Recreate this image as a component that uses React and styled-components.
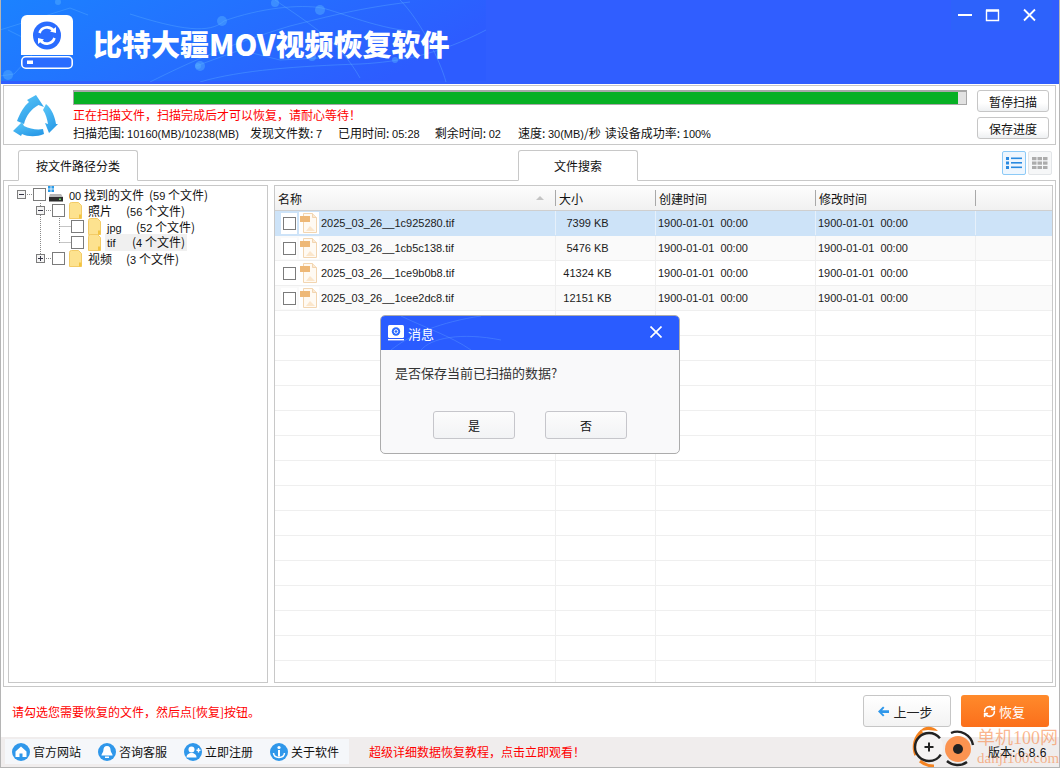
import React from 'react';
import styled, { createGlobalStyle } from 'styled-components';
import { RefreshCw } from 'lucide-react';

const GlobalStyle = createGlobalStyle`
  * { box-sizing: border-box; }
  html, body { margin: 0; padding: 0; background: #fff; }
  body {
    font-family: "Liberation Sans", "Noto Sans CJK SC", sans-serif;
    font-size: 12px;
    color: #111;
  }
`;

// Janela principal
const Window = styled.div`
  position: relative;
  width: 1060px;
  height: 768px;
  overflow: hidden;
  display: flex;
  flex-direction: column;
  background: #fff;
  border-left: 1px solid #b5b5b5;
  border-right: 1px solid #b5b5b5;
  border-bottom: 1px solid #b5b5b5;
`;

const Header = styled.header`
  position: relative;
  flex: none;
  height: 84px;
  margin: 0 -1px;
  background: #305eff;
  display: flex;
  align-items: flex-start;
`;

const HeaderArt = styled.svg`
  position: absolute;
  left: 0;
  top: 0;
`;

const Brand = styled.div`
  position: relative;
  display: flex;
  align-items: center;
  padding: 15px 0 0 21px;
  gap: 20px;
`;

const BrandTitle = styled.h1`
  margin: 0;
  color: #fff;
  font-family: "Noto Sans CJK SC", sans-serif;
  font-size: 29px;
  font-weight: 900;
  line-height: 30px;
  padding-top: 2px;
  white-space: nowrap;
`;

const WindowControls = styled.div`
  position: relative;
  margin-left: auto;
  margin-right: 8px;
  width: 101px;
  height: 30px;
  background: #2d62fb;
  display: flex;
  align-items: center;
`;

const Scan = styled.section`
  flex: none;
  margin: 1px 3px 0 2px;
  height: 60px;
  border: 1px solid #c8c8c8;
  display: flex;
`;

const ScanIcon = styled.div`
  flex: none;
  width: 69px;
  padding: 9px 0 0 9px;
`;

const ScanBody = styled.div`
  flex: none;
  width: 894px;
  padding-top: 4px;
`;

const Progress = styled.div`
  height: 15px;
  border: 1px solid #a8a8a8;
  border-top-width: 2px;
  background: #e2e2e2;
`;

const ProgressFill = styled.div`
  height: 100%;
  background: #07b024;
`;

const ScanMessage = styled.div`
  color: #f00;
  line-height: 16px;
  margin-top: 2px;
  font-family: "Noto Sans CJK SC", sans-serif;
`;

const Stats = styled.div`
  display: flex;
  gap: 15px;
  line-height: 18px;
  margin-top: 1px;
  white-space: nowrap;
  font-family: "Noto Sans CJK SC", sans-serif;
`;

const Stat = styled.span`
  margin-left: ${(p) => p.$shift || 0}px;
`;

const Num = styled.span`
  font-family: "Liberation Sans", sans-serif;
  font-size: 11px;
`;

const ScanButtons = styled.div`
  flex: none;
  margin-left: 10px;
  padding-top: 4px;
  display: flex;
  flex-direction: column;
  gap: 5px;
`;

const PlainButton = styled.button`
  width: 72px;
  height: 22px;
  padding: 0;
  border: 1px solid #c6c6c6;
  border-radius: 3px;
  background: linear-gradient(#fff 60%, #eef0f2);
  font-family: "Noto Sans CJK SC", sans-serif;
  font-size: 12px;
  color: #111;
`;

const TabBar = styled.div`
  flex: none;
  height: 35px;
  margin: 0 3px 0 2px;
  padding: 5px 4px 0 15px;
  display: flex;
  align-items: flex-start;
`;

const Tab = styled.div`
  flex: none;
  width: 120px;
  height: 31px;
  margin-left: ${(p) => p.$offset || 0}px;
  border: 1px solid #c8c8c8;
  border-bottom: 1px solid #fff;
  border-radius: 3px 3px 0 0;
  background: #fff;
  position: relative;
  z-index: 1;
  text-align: center;
  line-height: 29px;
  font-family: "Noto Sans CJK SC", sans-serif;
`;

const ViewButtons = styled.div`
  margin-left: auto;
  display: flex;
  gap: 2px;
  margin-top: 1px;
`;

const ViewButton = styled.div`
  width: 24px;
  height: 24px;
  border: 1px solid ${(p) => (p.$active ? '#8ccaf7' : '#e2e5e8')};
  border-radius: 2px;
  background: ${(p) => (p.$active ? '#eef6fe' : '#f6f7f8')};
  display: flex;
  align-items: center;
  justify-content: center;
`;

const Main = styled.main`
  flex: none;
  height: 507px;
  margin: 0 3px 0 2px;
  padding: 4px 2px 3px 4px;
  border: 1px solid #c8c8c8;
  display: flex;
  gap: 6px;
`;

const TreePanel = styled.div`
  position: relative;
  flex: none;
  width: 260px;
  border: 1px solid #c8c8c8;
`;

const TreeLines = styled.svg`
  position: absolute;
  left: 0;
  top: 0;
`;

const TreeRow = styled.div`
  position: relative;
  height: 16px;
  display: flex;
  align-items: center;
  padding-left: ${(p) => p.$indent}px;
  white-space: nowrap;
  font-family: "Noto Sans CJK SC", sans-serif;
`;

const Expander = styled.span`
  flex: none;
  width: 9px;
  height: 9px;
  margin-right: 7px;
  border: 1px solid #7d7d7d;
  background: #f4f4f4;
  position: relative;
  &::before {
    content: '';
    position: absolute;
    left: 1px;
    right: 1px;
    top: 3px;
    height: 1px;
    background: #334;
  }
  &::after {
    content: '';
    display: ${(p) => (p.$open ? 'none' : 'block')};
    position: absolute;
    top: 1px;
    bottom: 1px;
    left: 3px;
    width: 1px;
    background: #334;
  }
`;

const Check = styled.span`
  flex: none;
  display: block;
  width: 13px;
  height: 13px;
  border: 1px solid #7b7b7b;
  background: #fff;
`;

const TreeName = styled.span`
  flex: none;
  margin-left: ${(p) => p.$gap}px;
  width: ${(p) => p.$width}px;
`;

const TreeSelected = styled.span`
  display: flex;
  margin-left: 4px;
  padding: 0 2px;
  background: #f0f0f0;
  line-height: 15px;
`;

const TreeIcon = styled.svg`
  flex: none;
  margin-left: ${(p) => p.$gap || 0}px;
`;

const Table = styled.div`
  flex: 1;
  border: 1px solid #c8c8c8;
  overflow: hidden;
`;

const columns = '281px 100px 160px 160px 1fr';

const TableHead = styled.div`
  height: 25px;
  display: grid;
  grid-template-columns: ${columns};
  background: linear-gradient(#fdfdfd, #f1f1f1);
  border-bottom: 1px solid #cfcfcf;
  font-family: "Noto Sans CJK SC", sans-serif;
`;

const HeadCell = styled.div`
  position: relative;
  display: flex;
  align-items: center;
  padding-left: 3px;
  &::after {
    content: '';
    position: absolute;
    right: 0;
    top: 4px;
    bottom: 4px;
    width: 1px;
    background: #a9a9a9;
  }
`;

const SortMark = styled.span`
  position: absolute;
  right: 12px;
  top: 10px;
  border-left: 4px solid transparent;
  border-right: 4px solid transparent;
  border-bottom: 4px solid #c4c4c4;
`;

const Row = styled.div`
  height: 25px;
  display: grid;
  grid-template-columns: ${columns};
  align-items: stretch;
  border-bottom: 1px solid ${(p) => (p.$selected ? '#cde3f8' : '#efefef')};
  background: ${(p) => (p.$selected ? '#cde3f8' : p.$stripe ? '#fafafa' : '#fff')};
  font-size: 11px;
  color: #1c1c1c;
`;

const Cell = styled.div`
  display: flex;
  align-items: center;
  border-right: 1px solid ${(p) => (p.$selected ? '#e6f0fa' : '#efefef')};
  padding-left: 2px;
  white-space: pre;
`;

const NameCell = styled(Cell)`
  padding-left: 6px;
`;

const CheckHolder = styled.span`
  flex: none;
  width: 16px;
  height: 21px;
  margin-right: 2px;
  display: flex;
  align-items: center;
  justify-content: center;
  background: #fff;
`;

const FileGlyph = styled.svg`
  flex: none;
  margin-right: 2px;
`;

const SizeCell = styled(Cell)`
  justify-content: center;
  padding: 0 36px 0 0;
`;

const Hint = styled.div`
  flex: none;
  height: 50px;
  padding: 0 10px 2px 11px;
  display: flex;
  align-items: center;
  color: #f00;
  font-family: "Noto Sans CJK SC", sans-serif;
`;

const BackButton = styled.button`
  margin-left: auto;
  width: 88px;
  height: 32px;
  padding: 0 3px 0 0;
  border: 1px solid #c6c6c6;
  border-radius: 3px;
  background: linear-gradient(#fff, #f3f3f3);
  display: flex;
  align-items: center;
  justify-content: center;
  gap: 4px;
  font-family: "Noto Sans CJK SC", sans-serif;
  font-size: 13px;
  color: #222;
`;

const RestoreButton = styled.button`
  margin-left: 10px;
  width: 88px;
  height: 32px;
  padding: 0 2px 0 0;
  border: none;
  border-radius: 3px;
  background: linear-gradient(#ff8a2b, #fb6f1b);
  display: flex;
  align-items: center;
  justify-content: center;
  gap: 3px;
  font-family: "Noto Sans CJK SC", sans-serif;
  font-size: 13px;
  color: #fff;
`;

const BottomBar = styled.footer`
  flex: 1;
  background: #f0eded;
  padding: 2px 0 0 4px;
  display: flex;
  align-items: flex-start;
  font-family: "Noto Sans CJK SC", sans-serif;
`;

const Links = styled.nav`
  flex: none;
  width: 344px;
  height: 25px;
  padding-left: 7px;
  background: #f5f7fa;
  display: flex;
  align-items: center;
`;

const LinkItem = styled.a`
  flex: none;
  width: 86px;
  display: flex;
  align-items: center;
  gap: 3px;
  color: #111;
  white-space: nowrap;
`;

const Promo = styled.span`
  margin-left: 20px;
  line-height: 25px;
  color: #f00;
  white-space: nowrap;
`;

// Marca d'água por cima do canto inferior
const Watermark = styled.div`
  position: absolute;
  right: 0;
  bottom: 0;
  width: 149px;
  height: 44px;
  pointer-events: none;
`;

const WatermarkLogo = styled.svg`
  position: absolute;
  left: 0;
  top: 0;
`;

const WatermarkTitle = styled.span`
  position: absolute;
  left: 67px;
  top: 3px;
  font-family: "Liberation Serif", "Noto Sans CJK SC", serif;
  font-size: 18px;
  line-height: 24px;
  color: rgba(247, 135, 70, 0.6);
  white-space: nowrap;
`;

const WatermarkUrl = styled.span`
  position: absolute;
  left: 67px;
  top: 27px;
  font-family: "Liberation Serif", serif;
  font-size: 15px;
  line-height: 16px;
  color: rgba(247, 135, 70, 0.6);
`;

const Version = styled.span`
  position: absolute;
  left: 78px;
  top: 21px;
  line-height: 16px;
  color: #111;
  white-space: nowrap;
  font-family: "Noto Sans CJK SC", sans-serif;
`;

const VersionNum = styled(Num)`
  font-size: 12px;
  letter-spacing: 0.4px;
`;

// Diálogo de mensagem
const Dialog = styled.div`
  position: absolute;
  left: 379px;
  top: 315px;
  width: 300px;
  height: 139px;
  border: 1px solid #acacac;
  border-radius: 5px;
  background: #f9f9fa;
  overflow: hidden;
  font-family: "Noto Sans CJK SC", sans-serif;
`;

const DialogHead = styled.div`
  position: relative;
  height: 34px;
  background: #2a5cff;
  display: flex;
  align-items: center;
  padding: 0 17px 0 7px;
  color: #fff;
  font-size: 13px;
  gap: 4px;
`;

const DialogClose = styled.svg`
  position: relative;
  margin-left: auto;
  margin-top: -2px;
`;

const DialogArt = styled.svg`
  position: absolute;
  left: 0;
  top: 0;
`;

const DialogLogo = styled.svg`
  position: relative;
`;

const DialogTitle = styled.span`
  position: relative;
`;

const DialogText = styled.p`
  margin: 0;
  padding: 13px 0 0 14px;
  height: 61px;
  font-size: 13px;
  line-height: 20px;
  color: #333;
`;

const DialogActions = styled.div`
  display: flex;
  gap: 30px;
  padding-left: 52px;
`;

const DialogButton = styled.button`
  width: 82px;
  height: 28px;
  padding: 0;
  border: 1px solid #c6c6cb;
  border-radius: 3px;
  background: linear-gradient(#fcfcfc, #f2f3f5);
  font-family: "Noto Sans CJK SC", sans-serif;
  font-size: 12px;
  color: #111;
`;

const files = [
  { name: '2025_03_26__1c925280.tif', size: '7399 KB' },
  { name: '2025_03_26__1cb5c138.tif', size: '5476 KB' },
  { name: '2025_03_26__1ce9b0b8.tif', size: '41324 KB' },
  { name: '2025_03_26__1cee2dc8.tif', size: '12151 KB' },
];

const emptyRows = Array.from({ length: 15 }, (_, i) => i);

const Folder = ({ gap }) => (
  <TreeIcon $gap={gap} width="13" height="17" viewBox="0 0 13 17">
    <path d="M0.5 2.5a2 2 0 0 1 2-2h7l3 3v13h-12z" fill="#fde28f" stroke="#f3cb66" />
    <path d="M10 12.5h2.5v4H10z" fill="#f3c440" />
  </TreeIcon>
);

const FileIcon = () => (
  <FileGlyph width="20" height="22" viewBox="0 0 20 22">
    <rect width="20" height="22" fill="#fff" />
    <path d="M4.5 1.5h9l4 4v15h-13z" fill="#fffaf3" stroke="#f2d5b0" />
    <path d="M13.5 1.5v4h4" fill="#fbe9d2" stroke="#f2d5b0" />
    <rect x="1" y="4" width="10" height="6" fill="#eeb877" />
    <path d="M7 19l4-5 5 5z" fill="#fbe6cb" />
  </FileGlyph>
);

const HeaderNetwork = () => (
  <HeaderArt width="486" height="82" viewBox="0 0 486 82">
    <defs>
      <linearGradient id="hdr" x1="0" y1="0" x2="1" y2="0.3">
        <stop offset="0" stopColor="#1b82ff" />
        <stop offset="0.5" stopColor="#2470ff" />
        <stop offset="1" stopColor="#2d5cff" />
      </linearGradient>
    </defs>
    <rect width="486" height="81" fill="url(#hdr)" />
    <g fill="none" stroke="#62b4ff" strokeOpacity="0.35">
      <path d="M0 30L70 8L88 15" />
      <path d="M0 76L14 74L40 46L8 30" />
      <path d="M130 14C180 30 210 34 224 21C260 8 300 4 322 8C340 12 380 30 420 32" />
      <path d="M150 82C190 62 230 44 290 26C330 16 360 8 410 2" />
      <path d="M200 82C240 70 300 66 360 64C400 62 440 54 486 30" />
      <path d="M275 0C310 24 340 42 360 78" />
      <path d="M196 66L240 50L280 60L318 58" />
      <path d="M400 0C420 20 440 60 446 82" />
    </g>
    <g fill="#58b2ff" fillOpacity="0.45">
      <circle cx="275" cy="3" r="4" />
      <circle cx="222" cy="21" r="5" />
      <circle cx="200" cy="66" r="5" />
      <circle cx="320" cy="10" r="5" />
      <circle cx="198" cy="66" r="3" />
      <circle cx="8" cy="75" r="5" />
      <circle cx="312" cy="57" r="4" />
      <circle cx="58" cy="2" r="3" />
      <circle cx="395" cy="60" r="3" />
    </g>
  </HeaderArt>
);

const BrandLogo = () => (
  <svg width="52" height="54" viewBox="0 0 52 54">
    <path d="M6 0h40a6 6 0 0 1 6 6v34H0V6a6 6 0 0 1 6-6z" fill="#fff" />
    <rect x="0.8" y="41.8" width="50.4" height="11.4" rx="4" fill="#2a6cff" stroke="#fff" strokeWidth="1.6" />
    <rect x="6" y="45.5" width="6" height="3.5" fill="#fff" />
    <circle cx="26" cy="20.5" r="14" fill="#2a6cff" />
    <g fill="none" stroke="#fff" strokeWidth="2.6">
      <path d="M18.5 18a8 8 0 0 1 14-2.4" />
      <path d="M33.5 23a8 8 0 0 1-14 2.4" />
    </g>
    <path d="M29 16.5l6 1.5 0-6zM23 24.5l-6-1.5 0 6z" fill="#fff" />
  </svg>
);

const ScanLogo = () => (
  <svg width="46" height="44" viewBox="0 0 46 44">
    <defs>
      <linearGradient id="rc" x1="0" y1="0" x2="0.6" y2="1">
        <stop offset="0" stopColor="#5cc8f8" />
        <stop offset="1" stopColor="#2a9be8" />
      </linearGradient>
    </defs>
    <g fill="url(#rc)">
      <path d="M23 0L31 12L25.5 10C18 14 13 21 11 29L4 26C7 18 11 11 16 7L14 5z" />
      <path d="M30 15L33 9C39 14 42 22 43 29L45 29L36 38L32 28L35 29C34 24 33 19 30 15z" />
      <path d="M0 36L9 27L11 31C17 34 24 35 30 34L31 39C24 42 15 42 9 39L8 41z" />
    </g>
  </svg>
);

const CircleIcon = ({ children }) => (
  <svg width="18" height="18" viewBox="0 0 18 18">
    <circle cx="9" cy="9" r="9" fill="#2f97ea" />
    {children}
  </svg>
);

export default function App() {
  return (
    <Window>
      <GlobalStyle />
      <Header>
        <HeaderNetwork />
        <Brand>
          <BrandLogo />
          <BrandTitle>比特大疆MOV视频恢复软件</BrandTitle>
        </Brand>
        <WindowControls>
          <svg width="101" height="30" viewBox="0 0 101 30" fill="none" stroke="#fff">
            <path d="M7 15h14" strokeWidth="2" />
            <path d="M35.5 10.5h12v10h-12z" strokeWidth="1.4" />
            <path d="M35 10.5h13" strokeWidth="2.4" />
            <path d="M73 9.5l11 11M84 9.5l-11 11" strokeWidth="1.8" />
          </svg>
        </WindowControls>
      </Header>

      <Scan>
        <ScanIcon>
          <ScanLogo />
        </ScanIcon>
        <ScanBody>
          <Progress>
            <ProgressFill style={{ width: `${(884 / 892) * 100}%` }} />
          </Progress>
          <ScanMessage>正在扫描文件，扫描完成后才可以恢复，请耐心等待！</ScanMessage>
          <Stats>
            <Stat>扫描范围: <Num>10160(MB)/10238(MB)</Num></Stat>
            <Stat $shift={-4}>发现文件数: <Num>7</Num></Stat>
            <Stat $shift={1}>已用时间: <Num>05:28</Num></Stat>
            <Stat>剩余时间: <Num>02</Num></Stat>
            <Stat $shift={2}>速度: <Num>30(MB)</Num>/秒</Stat>
            <Stat $shift={-11}>读设备成功率: <Num>100%</Num></Stat>
          </Stats>
        </ScanBody>
        <ScanButtons>
          <PlainButton>暂停扫描</PlainButton>
          <PlainButton>保存进度</PlainButton>
        </ScanButtons>
      </Scan>

      <TabBar>
        <Tab>按文件路径分类</Tab>
        <Tab $offset={380}>文件搜索</Tab>
        <ViewButtons>
          <ViewButton $active>
            <svg width="16" height="12" viewBox="0 0 16 12" fill="#2a8ae0">
              <rect x="0" y="0" width="3" height="3" />
              <rect x="0" y="4.5" width="3" height="3" />
              <rect x="0" y="9" width="3" height="3" />
              <rect x="5" y="0.5" width="11" height="1.6" />
              <rect x="5" y="5" width="11" height="1.6" />
              <rect x="5" y="9.5" width="11" height="1.6" />
            </svg>
          </ViewButton>
          <ViewButton>
            <svg width="16" height="12" viewBox="0 0 16 12" fill="#acacac">
              {[0, 4.5, 9].map((y) =>
                [0, 5.5, 11].map((x) => <rect key={`${x}-${y}`} x={x} y={y} width="4.5" height="3.2" />)
              )}
            </svg>
          </ViewButton>
        </ViewButtons>
      </TabBar>

      <Main>
        <TreePanel>
          <TreeLines width="200" height="90" viewBox="0 0 200 90" fill="none" stroke="#8a8a8a" strokeDasharray="1 1">
            <path d="M16 8.5h8" />
            <path d="M31.5 17v56" />
            <path d="M35 24.5h8" />
            <path d="M35 72.5h8" />
            <path d="M50.5 32v25" />
            <path d="M50.5 40.5h11" />
            <path d="M50.5 56.5h11" />
          </TreeLines>
          <TreeRow $indent={8}>
            <Expander $open />
            <Check />
            <TreeIcon $gap={2} width="16" height="16" viewBox="0 0 16 16">
              <rect x="0" y="0" width="2.6" height="2.6" fill="#2a9be8" />
              <rect x="3.4" y="0" width="2.6" height="2.6" fill="#2a9be8" />
              <rect x="0" y="3.4" width="2.6" height="2.6" fill="#2a9be8" />
              <rect x="3.4" y="3.4" width="2.6" height="2.6" fill="#2a9be8" />
              <path d="M2 8h11l2 3H1z" fill="#b8b8b8" />
              <rect x="1" y="11" width="14" height="4.5" fill="#2d2d2d" />
              <rect x="11" y="12.5" width="2" height="1.5" fill="#5fd05f" />
            </TreeIcon>
            <TreeName $gap={5} $width={80}><Num>00</Num> 找到的文件</TreeName>
            <span>(<Num>59</Num> 个文件)</span>
          </TreeRow>
          <TreeRow $indent={27}>
            <Expander $open />
            <Check />
            <Folder gap={4} />
            <TreeName $gap={6} $width={38}>照片</TreeName>
            <span>(<Num>56</Num> 个文件)</span>
          </TreeRow>
          <TreeRow $indent={62}>
            <Check />
            <Folder gap={4} />
            <TreeName $gap={6} $width={29}><Num>jpg</Num></TreeName>
            <span>(<Num>52</Num> 个文件)</span>
          </TreeRow>
          <TreeRow $indent={62}>
            <Check />
            <Folder gap={4} />
            <TreeSelected>
              <TreeName $gap={0} $width={25}><Num>tif</Num></TreeName>
              <span>(<Num>4</Num> 个文件)</span>
            </TreeSelected>
          </TreeRow>
          <TreeRow $indent={27}>
            <Expander />
            <Check />
            <Folder gap={4} />
            <TreeName $gap={6} $width={38}>视频</TreeName>
            <span>(<Num>3</Num> 个文件)</span>
          </TreeRow>
        </TreePanel>

        <Table>
          <TableHead>
            <HeadCell>名称<SortMark /></HeadCell>
            <HeadCell>大小</HeadCell>
            <HeadCell>创建时间</HeadCell>
            <HeadCell>修改时间</HeadCell>
            <div />
          </TableHead>
          {files.map((file, i) => (
            <Row key={file.name} $selected={i === 0} $stripe={i % 2 === 1}>
              <NameCell $selected={i === 0}>
                <CheckHolder><Check /></CheckHolder>
                <FileIcon />
                {file.name}
              </NameCell>
              <SizeCell $selected={i === 0}>{file.size}</SizeCell>
              <Cell $selected={i === 0}>1900-01-01  00:00</Cell>
              <Cell $selected={i === 0}>1900-01-01  00:00</Cell>
              <div />
            </Row>
          ))}
          {emptyRows.map((n) => (
            <Row key={n}>
              <Cell />
              <Cell />
              <Cell />
              <Cell />
              <div />
            </Row>
          ))}
        </Table>
      </Main>

      <Hint>
        请勾选您需要恢复的文件，然后点[恢复]按钮。
        <BackButton>
          <svg width="11" height="11" viewBox="0 0 12 11" fill="#2f97ea">
            <path d="M5.5 0L0 5.5 5.5 11 7 9.5 4.5 7H12V4H4.5L7 1.5z" />
          </svg>
          上一步
        </BackButton>
        <RestoreButton>
          <RefreshCw size={13} strokeWidth={3} color="#fff" />
          恢复
        </RestoreButton>
      </Hint>

      <BottomBar>
        <Links>
          <LinkItem>
            <CircleIcon>
              <path d="M9 3.5L3.5 8.5V14h4v-3.5h3V14h4V8.5z" fill="#fff" />
            </CircleIcon>
            官方网站
          </LinkItem>
          <LinkItem>
            <CircleIcon>
              <path d="M9 3c2.6 0 3.6 2.2 3.6 4.2 0 2 2 3.8 2 5.3H3.4c0-1.5 2-3.3 2-5.3C5.4 5.2 6.4 3 9 3z" fill="#fff" />
              <path d="M7 13.5h4V15H7z" fill="#fff" />
            </CircleIcon>
            咨询客服
          </LinkItem>
          <LinkItem>
            <CircleIcon>
              <circle cx="7.5" cy="6.5" r="3" fill="#fff" />
              <path d="M2.5 14.5c0-3 2.3-4.5 5-4.5s5 1.5 5 4.5z" fill="#fff" />
              <path d="M12.5 6.5h4v1.4h-4zM13.8 5h1.4v4.4h-1.4z" fill="#fff" />
            </CircleIcon>
            立即注册
          </LinkItem>
          <LinkItem>
            <CircleIcon>
              <circle cx="9" cy="4.5" r="1.6" fill="#fff" />
              <path d="M8 7h2v6.5H8z" fill="#fff" />
              <path d="M3.5 10c.3 3 2.5 4.5 5.5 4.5s5.2-1.5 5.5-4.5" fill="none" stroke="#fff" strokeWidth="1.5" />
            </CircleIcon>
            关于软件
          </LinkItem>
        </Links>
        <Promo>超级详细数据恢复教程，点击立即观看！</Promo>
      </BottomBar>

      <Watermark>
        <WatermarkLogo width="66" height="44" viewBox="0 0 66 44">
          <path d="M6 32A21 21 0 0 1 12 8" fill="none" stroke="#f58320" strokeWidth="3.5" />
          <path d="M10 38A21 21 0 0 0 24 43" fill="none" stroke="#f58320" strokeWidth="3" />
          <path d="M10 8C14 3 22 2 28 8L18 7z" fill="#f58320" />
          <circle cx="19" cy="24" r="14" fill="#f5f3f3" stroke="#222" strokeWidth="2.4" strokeDasharray="70 18" strokeDashoffset="-8" />
          <path d="M14.5 24h9M19 19.5v9" stroke="#222" strokeWidth="2" />
          <circle cx="48" cy="26" r="13" fill="#fb9350" />
          <path d="M41 10a16 16 0 0 1 22 12M37 38a16 16 0 0 0 20 1" fill="none" stroke="#222" strokeWidth="2.4" />
          <circle cx="48" cy="26" r="5" fill="#222" />
        </WatermarkLogo>
        <WatermarkTitle>单机100网</WatermarkTitle>
        <WatermarkUrl>danji100.com</WatermarkUrl>
        <Version>版本: <VersionNum>6.8.6</VersionNum></Version>
      </Watermark>

      <Dialog>
        <DialogHead>
          <DialogArt width="299" height="34" viewBox="0 0 299 34" fill="none" stroke="#5f9dff" strokeOpacity="0.4">
            <path d="M10 34C30 18 60 6 100 0" />
            <path d="M40 34C50 22 80 16 120 24" />
            <path d="M20 0C40 10 70 20 90 34" />
          </DialogArt>
          <DialogLogo width="16" height="16" viewBox="0 0 16 16">
            <rect x="0" y="0" width="16" height="13" rx="1.5" fill="#fff" />
            <rect x="0" y="14" width="16" height="1.4" fill="#fff" />
            <circle cx="8" cy="6.5" r="4.2" fill="#2a6cff" />
            <circle cx="8" cy="6.5" r="1.8" fill="none" stroke="#fff" />
          </DialogLogo>
          <DialogTitle>消息</DialogTitle>
          <DialogClose width="12" height="12" viewBox="0 0 12 12" stroke="#fff" strokeWidth="1.7">
            <path d="M0.5 0.5l11 11M11.5 0.5l-11 11" />
          </DialogClose>
        </DialogHead>
        <DialogText>是否保存当前已扫描的数据?</DialogText>
        <DialogActions>
          <DialogButton>是</DialogButton>
          <DialogButton>否</DialogButton>
        </DialogActions>
      </Dialog>
    </Window>
  );
}
